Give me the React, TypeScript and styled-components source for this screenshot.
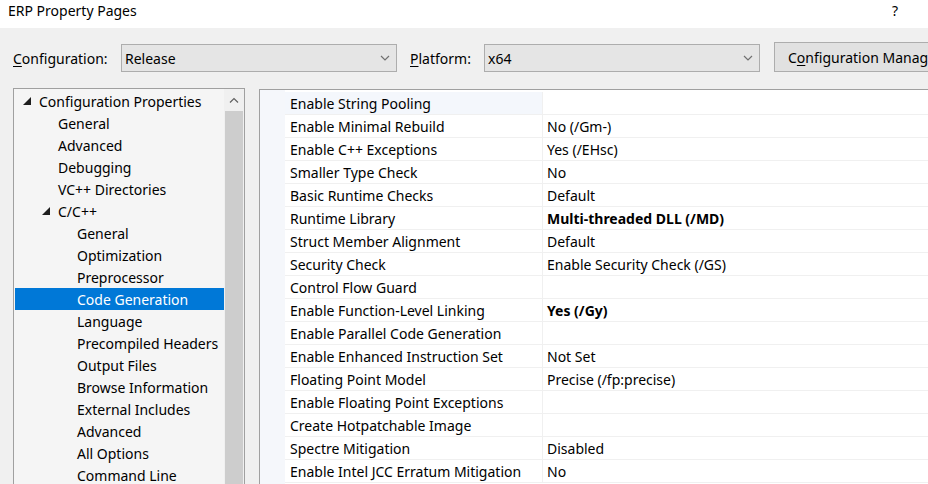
import React from "react";
import styled, { createGlobalStyle } from "styled-components";

const Global = createGlobalStyle`
  html, body { margin: 0; padding: 0; background: #f0f0f0; }
  body { font-family: "Noto Sans", "Segoe UI", sans-serif; color: #000; }
`;

const Window = styled.div`
  width: 928px;
  height: 484px;
  overflow: hidden;
  display: flex;
  flex-direction: column;
  background: #f0f0f0;
  font-size: 14px;
`;

const TitleBar = styled.div`
  height: 28px;
  flex: 0 0 28px;
  box-sizing: border-box;
  background: #fff;
  display: flex;
  align-items: center;
  justify-content: space-between;
  padding: 0 30px 8px 8px;
  font-size: 14px;
`;

const Toolbar = styled.div`
  height: 60px;
  flex: 0 0 60px;
  display: flex;
  align-items: center;
  padding-left: 13px;
  white-space: nowrap;
`;

const Label = styled.span<{ $w: number }>`
  width: ${(p) => p.$w}px;
  flex: 0 0 ${(p) => p.$w}px;
`;

const Combo = styled.div`
  width: 276px;
  flex: 0 0 276px;
  height: 28px;
  box-sizing: border-box;
  border: 1px solid #adadad;
  background: #e5e5e5;
  display: flex;
  align-items: center;
  justify-content: space-between;
  padding: 0 6px 0 3px;
  margin-right: 13px;
`;

const Button = styled.div`
  flex: 0 0 180px;
  height: 30px;
  box-sizing: border-box;
  border: 1px solid #adadad;
  background: #e1e1e1;
  display: flex;
  align-items: center;
  padding-left: 13px;
  margin-left: 1px;
  margin-top: -2px;
`;

const U = styled.span`
  text-decoration: underline;
  text-underline-offset: 2px;
`;

const Body = styled.div`
  flex: 1;
  display: flex;
  padding-left: 13px;
  gap: 14px;
  min-height: 0;
`;

const TreePanel = styled.div`
  width: 232px;
  flex: 0 0 232px;
  box-sizing: border-box;
  border: 1px solid #a0a0a0;
  border-bottom: none;
  background: #f5f5f5;
  display: flex;
  height: 400px;
`;

const TreeList = styled.div`
  flex: 1;
  padding: 1px 0 0 1px;
  overflow: hidden;
  min-width: 0;
`;

const TreeRow = styled.div<{ $level: number; $selected?: boolean }>`
  height: 22px;
  display: flex;
  align-items: center;
  padding-left: ${(p) => 8 + p.$level * 19}px;
  background: ${(p) => (p.$selected ? "#0078d7" : "transparent")};
  color: ${(p) => (p.$selected ? "#fff" : "#000")};
  white-space: nowrap;
`;

const Expander = styled.span`
  width: 16px;
  flex: 0 0 16px;
  display: flex;
  align-items: center;
`;

const Scrollbar = styled.div`
  width: 20px;
  flex: 0 0 20px;
  background: #f0f0f0;
  display: flex;
  flex-direction: column;
`;

const ScrollArrow = styled.div`
  height: 22px;
  display: flex;
  align-items: center;
  justify-content: center;
`;

const Thumb = styled.div`
  flex: 1;
  margin: 0 1px;
  background: #cdcdcd;
`;

const Grid = styled.div`
  flex: 1;
  margin-top: 1px;
  border-left: 1px solid #a0a0a0;
  border-top: 1px solid #a0a0a0;
  background: #fff;
  display: flex;
  height: 400px;
`;

const Gutter = styled.div`
  width: 25px;
  flex: 0 0 25px;
  background: #f5f7fb;
`;

const Rows = styled.div`
  flex: 1;
  padding-top: 2px;
`;

const Row = styled.div`
  display: grid;
  grid-template-columns: 258px 1fr;
  height: 23px;
  box-sizing: border-box;
  border-bottom: 1px solid #f0f0f0;
`;

const NameCell = styled.div<{ $hl?: boolean }>`
  display: flex;
  align-items: center;
  padding-left: 5px;
  border-right: 1px solid #f0f0f0;
  background: ${(p) => (p.$hl ? "#f4f7fc" : "#fff")};
  white-space: nowrap;
`;

const ValueCell = styled.div<{ $bold?: boolean }>`
  display: flex;
  align-items: center;
  padding-left: 4px;
  font-weight: ${(p) => (p.$bold ? 700 : 400)};
  white-space: nowrap;
`;

const Chevron = ({ up }: { up?: boolean }) => (
  <svg width="10" height="6" viewBox="0 0 10 6">
    <path
      d={up ? "M1 5.5 L5 1.5 L9 5.5" : "M1 1 L5 5 L9 1"}
      fill="none"
      stroke={up ? "#606060" : "#707070"}
      strokeWidth="1.2"
    />
  </svg>
);

const Tri = () => (
  <svg width="8" height="8" viewBox="0 0 8 8">
    <polygon points="8,0 8,8 0,8" fill="#1e1e1e" />
  </svg>
);

type TreeItem = { label: string; level: number; expanded?: boolean; selected?: boolean };

const tree: TreeItem[] = [
  { label: "Configuration Properties", level: 0, expanded: true },
  { label: "General", level: 1 },
  { label: "Advanced", level: 1 },
  { label: "Debugging", level: 1 },
  { label: "VC++ Directories", level: 1 },
  { label: "C/C++", level: 1, expanded: true },
  { label: "General", level: 2 },
  { label: "Optimization", level: 2 },
  { label: "Preprocessor", level: 2 },
  { label: "Code Generation", level: 2, selected: true },
  { label: "Language", level: 2 },
  { label: "Precompiled Headers", level: 2 },
  { label: "Output Files", level: 2 },
  { label: "Browse Information", level: 2 },
  { label: "External Includes", level: 2 },
  { label: "Advanced", level: 2 },
  { label: "All Options", level: 2 },
  { label: "Command Line", level: 2 },
];

type Prop = { name: string; value: string; bold?: boolean };

const props: Prop[] = [
  { name: "Enable String Pooling", value: "" },
  { name: "Enable Minimal Rebuild", value: "No (/Gm-)" },
  { name: "Enable C++ Exceptions", value: "Yes (/EHsc)" },
  { name: "Smaller Type Check", value: "No" },
  { name: "Basic Runtime Checks", value: "Default" },
  { name: "Runtime Library", value: "Multi-threaded DLL (/MD)", bold: true },
  { name: "Struct Member Alignment", value: "Default" },
  { name: "Security Check", value: "Enable Security Check (/GS)" },
  { name: "Control Flow Guard", value: "" },
  { name: "Enable Function-Level Linking", value: "Yes (/Gy)", bold: true },
  { name: "Enable Parallel Code Generation", value: "" },
  { name: "Enable Enhanced Instruction Set", value: "Not Set" },
  { name: "Floating Point Model", value: "Precise (/fp:precise)" },
  { name: "Enable Floating Point Exceptions", value: "" },
  { name: "Create Hotpatchable Image", value: "" },
  { name: "Spectre Mitigation", value: "Disabled" },
  { name: "Enable Intel JCC Erratum Mitigation", value: "No" },
];

export default function App() {
  return (
    <>
      <Global />
      <Window>
        <TitleBar>
          <span>ERP Property Pages</span>
          <span>?</span>
        </TitleBar>
        <Toolbar>
          <Label $w={108}>
            <U>C</U>onfiguration:
          </Label>
          <Combo>
            <span>Release</span>
            <Chevron />
          </Combo>
          <Label $w={74}>
            <U>P</U>latform:
          </Label>
          <Combo>
            <span>x64</span>
            <Chevron />
          </Combo>
          <Button>
            C<U>o</U>nfiguration Manager...
          </Button>
        </Toolbar>
        <Body>
          <TreePanel>
            <TreeList>
              {tree.map((t, i) => (
                <TreeRow key={i} $level={t.level} $selected={t.selected}>
                  <Expander>{t.expanded ? <Tri /> : null}</Expander>
                  {t.label}
                </TreeRow>
              ))}
            </TreeList>
            <Scrollbar>
              <ScrollArrow>
                <Chevron up />
              </ScrollArrow>
              <Thumb />
            </Scrollbar>
          </TreePanel>
          <Grid>
            <Gutter />
            <Rows>
              {props.map((p, i) => (
                <Row key={i}>
                  <NameCell $hl={i === 0}>{p.name}</NameCell>
                  <ValueCell $bold={p.bold}>{p.value}</ValueCell>
                </Row>
              ))}
            </Rows>
          </Grid>
        </Body>
      </Window>
    </>
  );
}
